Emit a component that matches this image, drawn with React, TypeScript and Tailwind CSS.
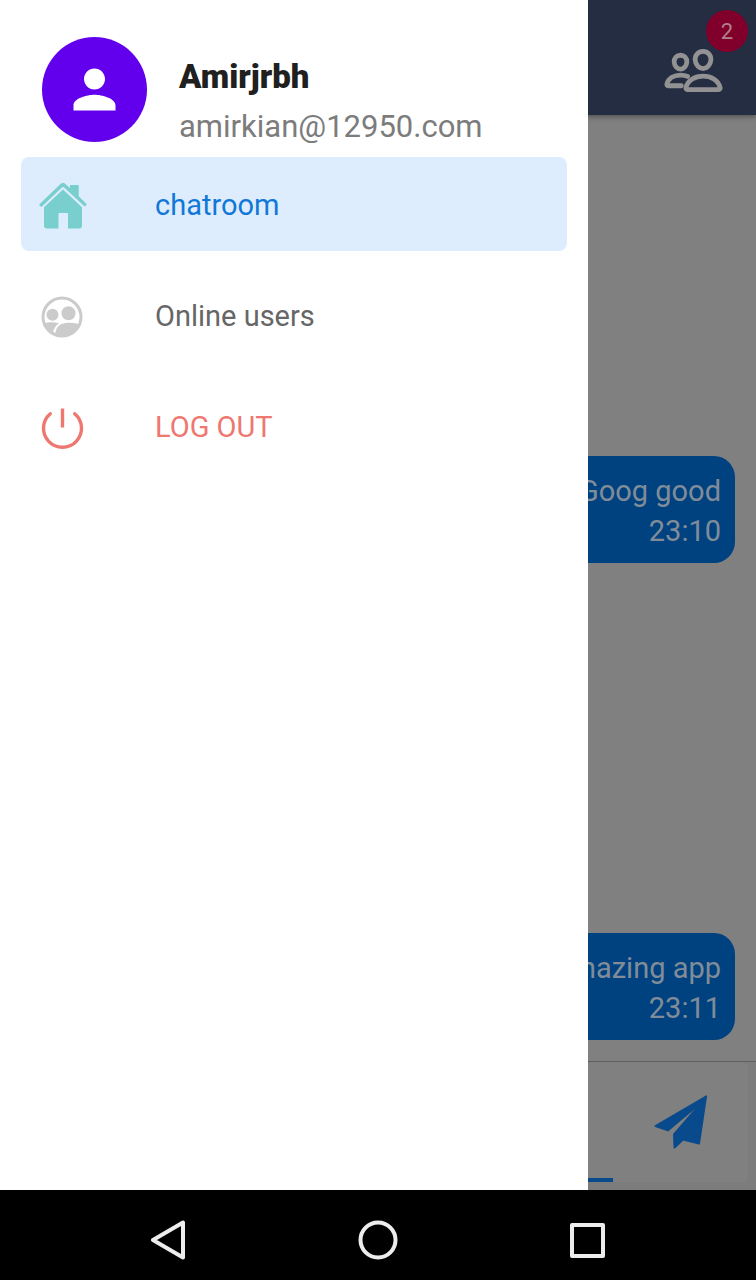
import { IoPeopleOutline } from "react-icons/io5";
import { MdPerson } from "react-icons/md";

function HomeIcon() {
  return (
    <svg viewBox="0 0 48 46" className="h-[46px] w-12" fill="#79cfcd" aria-hidden="true">
      <path d="M21.2 1.2a4 4 0 0 1 5.6 0L32 6V3a1 1 0 0 1 1-1h5.500a1 1 0 0 1 1 1v10l7.800 7.700a1 1 0 0 1 0 1.400l-.8.800a1 1 0 0 1-1.400 0L25.100 4.600a1.600 1.600 0 0 0-2.200 0L3 23.400a1 1 0 0 1-1.400 0l-.9-.9a1 1 0 0 1 0-1.400Z" />
      <path d="M31 2h8.500v11.500L31 6Z" />
      <path d="M24 6.600 43 24.200v18.300a3 3 0 0 1-3 3H29V31a1 1 0 0 0-1-1h-7.500a1 1 0 0 0-1 1v14.500H8a3 3 0 0 1-3-3V24.200Z" />
    </svg>
  );
}

function OnlineUsersIcon() {
  return (
    <svg viewBox="-2 -2 46 46" className="size-[46px]" fill="#cbcbcb" aria-hidden="true">
      <circle cx="21" cy="21" r="19" fill="none" stroke="#cbcbcb" strokeWidth="3" />
      <circle cx="11.500" cy="18.800" r="6" />
      <circle cx="27.500" cy="17.300" r="7" />
      <path d="M2.500 27.500c5-1.800 11-1.700 15.500-.2-3 2-5.500 5-6 10C6.500 35 4 31.500 2.500 27.500Z" />
      <path d="M39.500 29c-4-2.500-15.500-3-20-.5-3 1.700-4.500 4.500-5.500 9.800 9 4.500 21 2 25.500-9.300Z" />
    </svg>
  );
}

function PowerIcon() {
  return (
    <svg viewBox="0 0 46 46" className="size-[46px]" fill="none" stroke="#ee7770" strokeWidth="3.400" aria-hidden="true">
      <path d="M11.300 8.700a19 19 0 1 0 24.400 0" strokeLinecap="round" />
      <path d="M23.500 3.500v19" />
    </svg>
  );
}

function SendIcon() {
  return (
    <svg viewBox="0 0 54 54" className="size-[54px]" fill="#084a8b" stroke="#084a8b" strokeWidth="2" strokeLinejoin="round" aria-hidden="true">
      <path d="M1.500 31 52 1.500 40.500 13 14 35.200Z" />
      <path d="M52 1.500 45 48.500 29 44.500 20.500 52.500 20 39.500 42.500 13.500Z" />
    </svg>
  );
}

function Message({ text, time }: { text: string; time: string }) {
  return (
    <article className="rounded-[21px] bg-[#004280] px-[14px] pt-[15px] pb-3 text-right text-[29px] leading-[40px] text-[#808d99]">
      <p>{text}</p>
      <time className="block">{time}</time>
    </article>
  );
}

function Chat() {
  return (
    <main className="flex flex-1 flex-col bg-[#808080]">
      <header className="z-10 flex h-[115px] items-end justify-end bg-[#242d42] px-8 pb-[14px] shadow-[0_2px_5px_rgba(0,0,0,0.35)]">
        <button aria-label="People in the room" className="relative text-[#929292] [&_path]:stroke-[40]">
          <IoPeopleOutline size={61} />
          <span className="absolute -top-[30px] -right-6 flex size-[42px] items-center justify-center rounded-full bg-[#80002b] text-[22px] text-[#b0808d]">
            2
          </span>
        </button>
      </header>
      <section className="flex flex-1 flex-col items-end justify-end gap-[370px] px-[21px] pb-[21px]">
        <Message text="Goog good" time="23:10" />
        <Message text="Amazing app" time="23:11" />
      </section>
      <form className="border-t border-[#606060] bg-[#7c7c7c] pr-2 pb-2" onSubmit={(e) => e.preventDefault()}>
        <div className="flex h-[120px] rounded-md bg-[#808080]">
          <input aria-label="Message" className="w-[613px] border-b-4 border-[#084a8b] bg-transparent text-[29px] outline-none" />
          <button aria-label="Send" className="flex flex-1 items-center justify-center">
            <SendIcon />
          </button>
        </div>
      </form>
    </main>
  );
}

function Drawer() {
  const row = "flex h-[94px] items-center rounded-lg px-[18px] pt-[3px] text-left text-[29px]";
  const slot = "flex w-[116px] shrink-0 items-center";
  return (
    <aside className="absolute inset-y-0 left-0 z-20 w-7/9 bg-white px-[21px] pt-[37px]">
      <div className="flex gap-8 px-[21px] pb-[5px]">
        <div className="flex size-[105px] items-center justify-center rounded-full bg-[#6200ee] text-white">
          <MdPerson size={63} />
        </div>
        <div className="flex flex-col pt-[15px]">
          <h1 className="text-[33px] leading-[50px] font-black text-[#202020]">Amirjrbh</h1>
          <p className="text-[31px] leading-[50px] text-[#7c7c7c]">amirkian@12950.com</p>
        </div>
      </div>
      <nav className="flex flex-col gap-[17px]">
        <button className={`${row} bg-[#deedfe] text-[#1178d8]`}>
          <span className={slot}><HomeIcon /></span>
          chatroom
        </button>
        <button className={`${row} text-[#666666]`}>
          <span className={slot}><OnlineUsersIcon /></span>
          Online users
        </button>
        <button className={`${row} text-[#ee7770]`}>
          <span className={slot}><PowerIcon /></span>
          LOG OUT
        </button>
      </nav>
    </aside>
  );
}

function SystemBar() {
  return (
    <footer className="grid h-[90px] grid-cols-3 bg-black px-16 pt-[10px]">
      <button aria-label="Back" className="flex items-center justify-center">
        <svg viewBox="0 0 40 40" className="size-10" fill="none" stroke="#ededed" strokeWidth="4" strokeLinejoin="round"><path d="M34 2.500v35L4 20Z" /></svg>
      </button>
      <button aria-label="Home" className="flex items-center justify-center">
        <svg viewBox="0 0 40 40" className="size-10" fill="none" stroke="#ededed" strokeWidth="4"><circle cx="20" cy="20" r="17.500" /></svg>
      </button>
      <button aria-label="Recent apps" className="flex items-center justify-center">
        <svg viewBox="0 0 40 40" className="size-10" fill="none" stroke="#ededed" strokeWidth="4" strokeLinejoin="round"><path d="M5 5h31v31H5Z" /></svg>
      </button>
    </footer>
  );
}

export default function App() {
  return (
    <div className="flex min-h-screen flex-col font-[Roboto,sans-serif]">
      <div className="relative flex flex-1 flex-col overflow-hidden">
        <Chat />
        <Drawer />
      </div>
      <SystemBar />
    </div>
  );
}
